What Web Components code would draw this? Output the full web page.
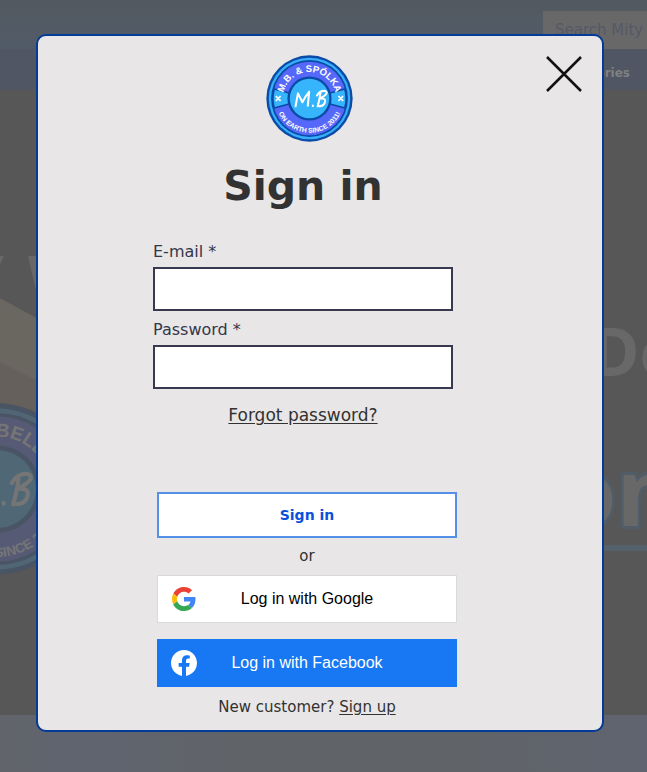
<!DOCTYPE html>
<html lang="en">
<head>
<meta charset="utf-8">
<meta name="viewport" content="width=device-width, initial-scale=1">
<title>Sign in</title>
<style>
  html, body { height: 100%; margin: 0; }
  body {
    --wide: "DejaVu Sans", Inter, sans-serif;
    --ink: #323232;
    font-family: var(--wide);
    color: var(--ink);
    overflow: hidden;
  }
</style>
</head>
<body>
<sign-in-page></sign-in-page>

<script>
const define = (name, html, setup) => {
  const template = document.createElement('template');
  template.innerHTML = html;
  customElements.define(name, class extends HTMLElement {
    constructor() {
      super();
      this.attachShadow({ mode: 'open' }).append(template.content.cloneNode(true));
    }
    connectedCallback() { if (setup) setup(this, this.shadowRoot); }
  });
};

define('brand-logo', `
<style>
  :host { display: block; }
  svg { display: block; width: 100%; }
  text { fill: #fff; font-family: "Liberation Sans", sans-serif; font-weight: 700; }
</style>
<svg viewBox="0 0 256 256" role="img" aria-label="M.B. logo">
  <defs>
    <path id="top" d="M50 128a78 78 0 0 1 156 0"/>
    <path id="bottom" d="M27 128a101 101 0 0 0 202 0"/>
  </defs>
  <circle cx="128" cy="128" r="127" fill="#0b4ba8"/>
  <circle cx="128" cy="128" r="120" fill="#36aefa"/>
  <circle cx="128" cy="128" r="113" fill="#0b4ba8"/>
  <circle cx="128" cy="128" r="108" fill="#5668fa"/>
  <path d="M128 128 24 100A108 108 0 0 0 24 156ZM128 128 232 100A108 108 0 0 1 232 156Z" fill="#36b4fc" stroke="#0b4ba8" stroke-width="5"/>
  <circle cx="128" cy="128" r="65" fill="#0b4ba8"/>
  <circle cx="128" cy="128" r="58" fill="#36b4fc"/>
  <path d="m29 121 14 14m0-14-14 14m184-14 14 14m0-14-14 14" stroke="#fff" stroke-width="5"/>
  <text font-size="28" text-anchor="middle"><textPath class="t" href="#top" startOffset="50%"></textPath></text>
  <text font-size="20" text-anchor="middle"><textPath class="b" href="#bottom" startOffset="50%"></textPath></text>
  <g fill="none" stroke="#fff" stroke-width="6" stroke-linecap="round" stroke-linejoin="round">
    <path d="M87 151q4-22 7-38 8 16 13 26 8-16 20-31-2 20-4 41M138 149v1"/>
    <path d="M160 113q-3 22-8 38M150 119q10-16 25-13 12 7-17 22 17-2 16 8-3 17-22 14"/>
  </g>
</svg>`, (host, root) => {
  root.querySelector('.t').textContent = host.getAttribute('top');
  root.querySelector('.b').textContent = host.getAttribute('bottom');
});

define('shop-backdrop', `
<style>
  :host { display: flex; flex-direction: column; height: 100vh; background: #575757; }
  header { background: linear-gradient(#535960, #525b65 60%, #515a68); display: flex; justify-content: flex-end; align-items: flex-end; height: 49px; }
  input { width: 104px; height: 38px; box-sizing: border-box; border: 0; border-radius: 0; margin: 0; padding: 0 0 0 12px; background: #686868; font: 15px var(--wide); flex: none; appearance: none; }
  input::placeholder { color: #555867; opacity: 1; }
  nav { height: 41px; background: #505663; display: flex; justify-content: flex-end; align-items: center; padding: 0 17px 0 0; box-sizing: border-box; padding-top: 6px; }
  nav a { color: #7e8082; font: 700 12px var(--wide); text-decoration: none; }
  main { flex: 1; position: relative; overflow: hidden; }
  main > svg { position: absolute; inset: 0; width: 100%; height: 100%; }
  svg text { font-family: "Noto Sans", sans-serif; font-weight: 700; fill: #686868; }
  .outlined { stroke: #505c68; stroke-width: 6px; paint-order: stroke; }
  brand-logo { position: absolute; width: 172px; left: -89px; top: 313px; opacity: .18; }
  footer { height: 57px; background: linear-gradient(90deg, #616469, #606470 12%, #606368 35%, #606368 75%, #5f6470); }
</style>
<header><input type="text" placeholder="Search Mity" aria-label="Search"></header>
<nav><a href="#">Categories</a></nav>
<main>
  <svg aria-hidden="true">
    <path d="M0 208 60 241V320H0Z" fill="#696760"/>
    <path d="M0 272 60 302V330L0 316Z" fill="#66605c"/>
    <path d="M-8 166H4L-6 188ZM28 166H37L44 195 60 166V230H43Z" fill="#686868"/>
    <circle cx="-3" cy="399" r="86" fill="#575757"/>
    <svg x="100%" overflow="visible">
      <text x="-56" y="286" font-size="66">De</text>
      <text class="outlined" x="-89" y="436" font-size="94">on</text>
      <path d="M-60 458H0" stroke="#56626b" stroke-width="6"/>
    </svg>
  </svg>
  <brand-logo top="M.B. &amp; BELL A" bottom="ON EARTH SINCE 2011!"></brand-logo>
</main>
<footer></footer>`);

define('form-field', `
<style>
  :host { display: block; }
  label { display: block; font-size: 16px; line-height: 18px; color: #34374a; margin-bottom: 6px; }
  input { display: block; width: 100%; height: 44px; box-sizing: border-box; border: 2px solid #38384f; border-radius: 0; background: #fff; margin: 0; padding: 0 10px; font: 16px var(--wide); }
</style>
<label for="field"><slot></slot></label>
<input id="field" required>`, (host, root) => {
  root.querySelector('input').type = host.getAttribute('type');
});

define('social-button', `
<style>
  :host { display: block; }
  button { display: flex; align-items: center; width: 100%; height: 48px; box-sizing: border-box; border: 1px solid #d9dadd; background: #fff; color: #000; padding: 0 13px; margin: 0; font: 16px "Liberation Sans", Arial, sans-serif; cursor: pointer; }
  :host([brand="facebook"]) button { background: #1877f2; border-color: #1877f2; color: #fff; }
  span { flex: 1; text-align: center; padding-right: 26px; }
  ::slotted(svg) { display: block; width: 26px; height: 26px; flex: none; }
</style>
<button type="button"><slot name="icon"></slot><span><slot></slot></span></button>`);

define('sign-in-dialog', `
<style>
  :host { display: block; box-sizing: border-box; background: #e8e6e6; border: 2px solid #043b96; border-radius: 10px; padding: 19px 26px 14px 0; }
  .column { width: min(308px, 100%); margin: 0 auto; display: flex; flex-direction: column; }
  .brand { padding-left: 4px; }
  brand-logo { width: 87px; margin: 0 auto; }
  h1 { margin: 17px 8px 0 0; font-size: 41px; line-height: 54px; font-weight: 700; text-align: center; }
  .fields { display: grid; gap: 10px; margin: 30px 8px 0 0; }
  .forgot { margin: 16px 8px 0 0; text-align: center; font-size: 17px; line-height: 20px; }
  a { color: inherit; text-underline-offset: 2px; }
  .actions { margin: 67px 4px 0; }
  .submit { display: block; width: 100%; height: 46px; border: 2px solid #5590e8; background: #fff; color: #0b50dc; font: 700 14px var(--wide); cursor: pointer; }
  p { margin: 0; text-align: center; font-size: 15px; line-height: 18px; }
  .or { margin: 9px 0 10px; }
  .google { margin-bottom: 16px; }
  .new { margin-top: 11px; }
  .close { position: absolute; top: 18px; right: 18px; width: 40px; height: 40px; padding: 0; border: 0; background: none; cursor: pointer; }
  .close svg { display: block; width: 100%; }
</style>
<button class="close" type="button" aria-label="Close">
  <svg viewBox="0 0 40 40"><path d="M3 3 37 37M37 3 3 37" stroke="#111" stroke-width="2.5" fill="none"/></svg>
</button>
<form class="column">
  <div class="brand"><brand-logo top="M.B. &amp; SPÓLKA" bottom="ON EARTH SINCE 2011!"></brand-logo></div>
  <h1>Sign in</h1>
  <div class="fields">
    <form-field type="email">E-mail *</form-field>
    <form-field type="password">Password *</form-field>
  </div>
  <div class="forgot"><a href="#">Forgot password?</a></div>
  <div class="actions">
    <button class="submit" type="submit">Sign in</button>
    <p class="or">or</p>
    <social-button class="google" brand="google">
      <svg slot="icon" viewBox="-2 -2 52 52" aria-hidden="true">
        <path fill="#EA4335" d="M24 9.5c3.54 0 6.71 1.22 9.21 3.6l6.85-6.85C35.9 2.38 30.47 0 24 0 14.62 0 6.51 5.38 2.56 13.22l7.98 6.19C12.43 13.72 17.74 9.5 24 9.5z"/>
        <path fill="#4285F4" d="M46.98 24.55c0-1.57-.15-3.09-.38-4.55H24v9.02h12.94c-.58 2.96-2.26 5.48-4.78 7.18l7.73 6c4.51-4.18 7.09-10.36 7.09-17.65z"/>
        <path fill="#FBBC05" d="M10.53 28.59c-.48-1.45-.76-2.99-.76-4.59s.27-3.14.76-4.59l-7.98-6.19C.92 16.46 0 20.12 0 24c0 3.88.92 7.54 2.56 10.78l7.97-6.19z"/>
        <path fill="#34A853" d="M24 48c6.48 0 11.93-2.13 15.89-5.81l-7.73-6c-2.15 1.45-4.92 2.3-8.16 2.3-6.26 0-11.57-4.22-13.47-9.91l-7.98 6.19C6.51 42.62 14.62 48 24 48z"/>
      </svg>Log in with Google
    </social-button>
    <social-button brand="facebook">
      <svg slot="icon" viewBox="0 0 24 24" aria-hidden="true">
        <path fill="#fff" d="M24 12.073c0-6.627-5.373-12-12-12s-12 5.373-12 12c0 5.99 4.388 10.954 10.125 11.854v-8.385H7.078v-3.47h3.047V9.43c0-3.007 1.792-4.669 4.533-4.669 1.312 0 2.686.235 2.686.235v2.953H15.83c-1.491 0-1.956.925-1.956 1.874v2.25h3.328l-.532 3.47h-2.796v8.385C19.612 23.027 24 18.062 24 12.073z"/>
      </svg>Log in with Facebook
    </social-button>
    <p class="new">New customer? <a href="#">Sign up</a></p>
  </div>
</form>`);

define('sign-in-page', `
<style>
  :host { display: block; position: relative; min-height: 100vh; }
  sign-in-dialog { position: absolute; top: 34px; left: 36px; right: 43px; z-index: 2; }
</style>
<shop-backdrop></shop-backdrop>
<sign-in-dialog role="dialog" aria-label="Sign in"></sign-in-dialog>`);
</script>
</body>
</html>
